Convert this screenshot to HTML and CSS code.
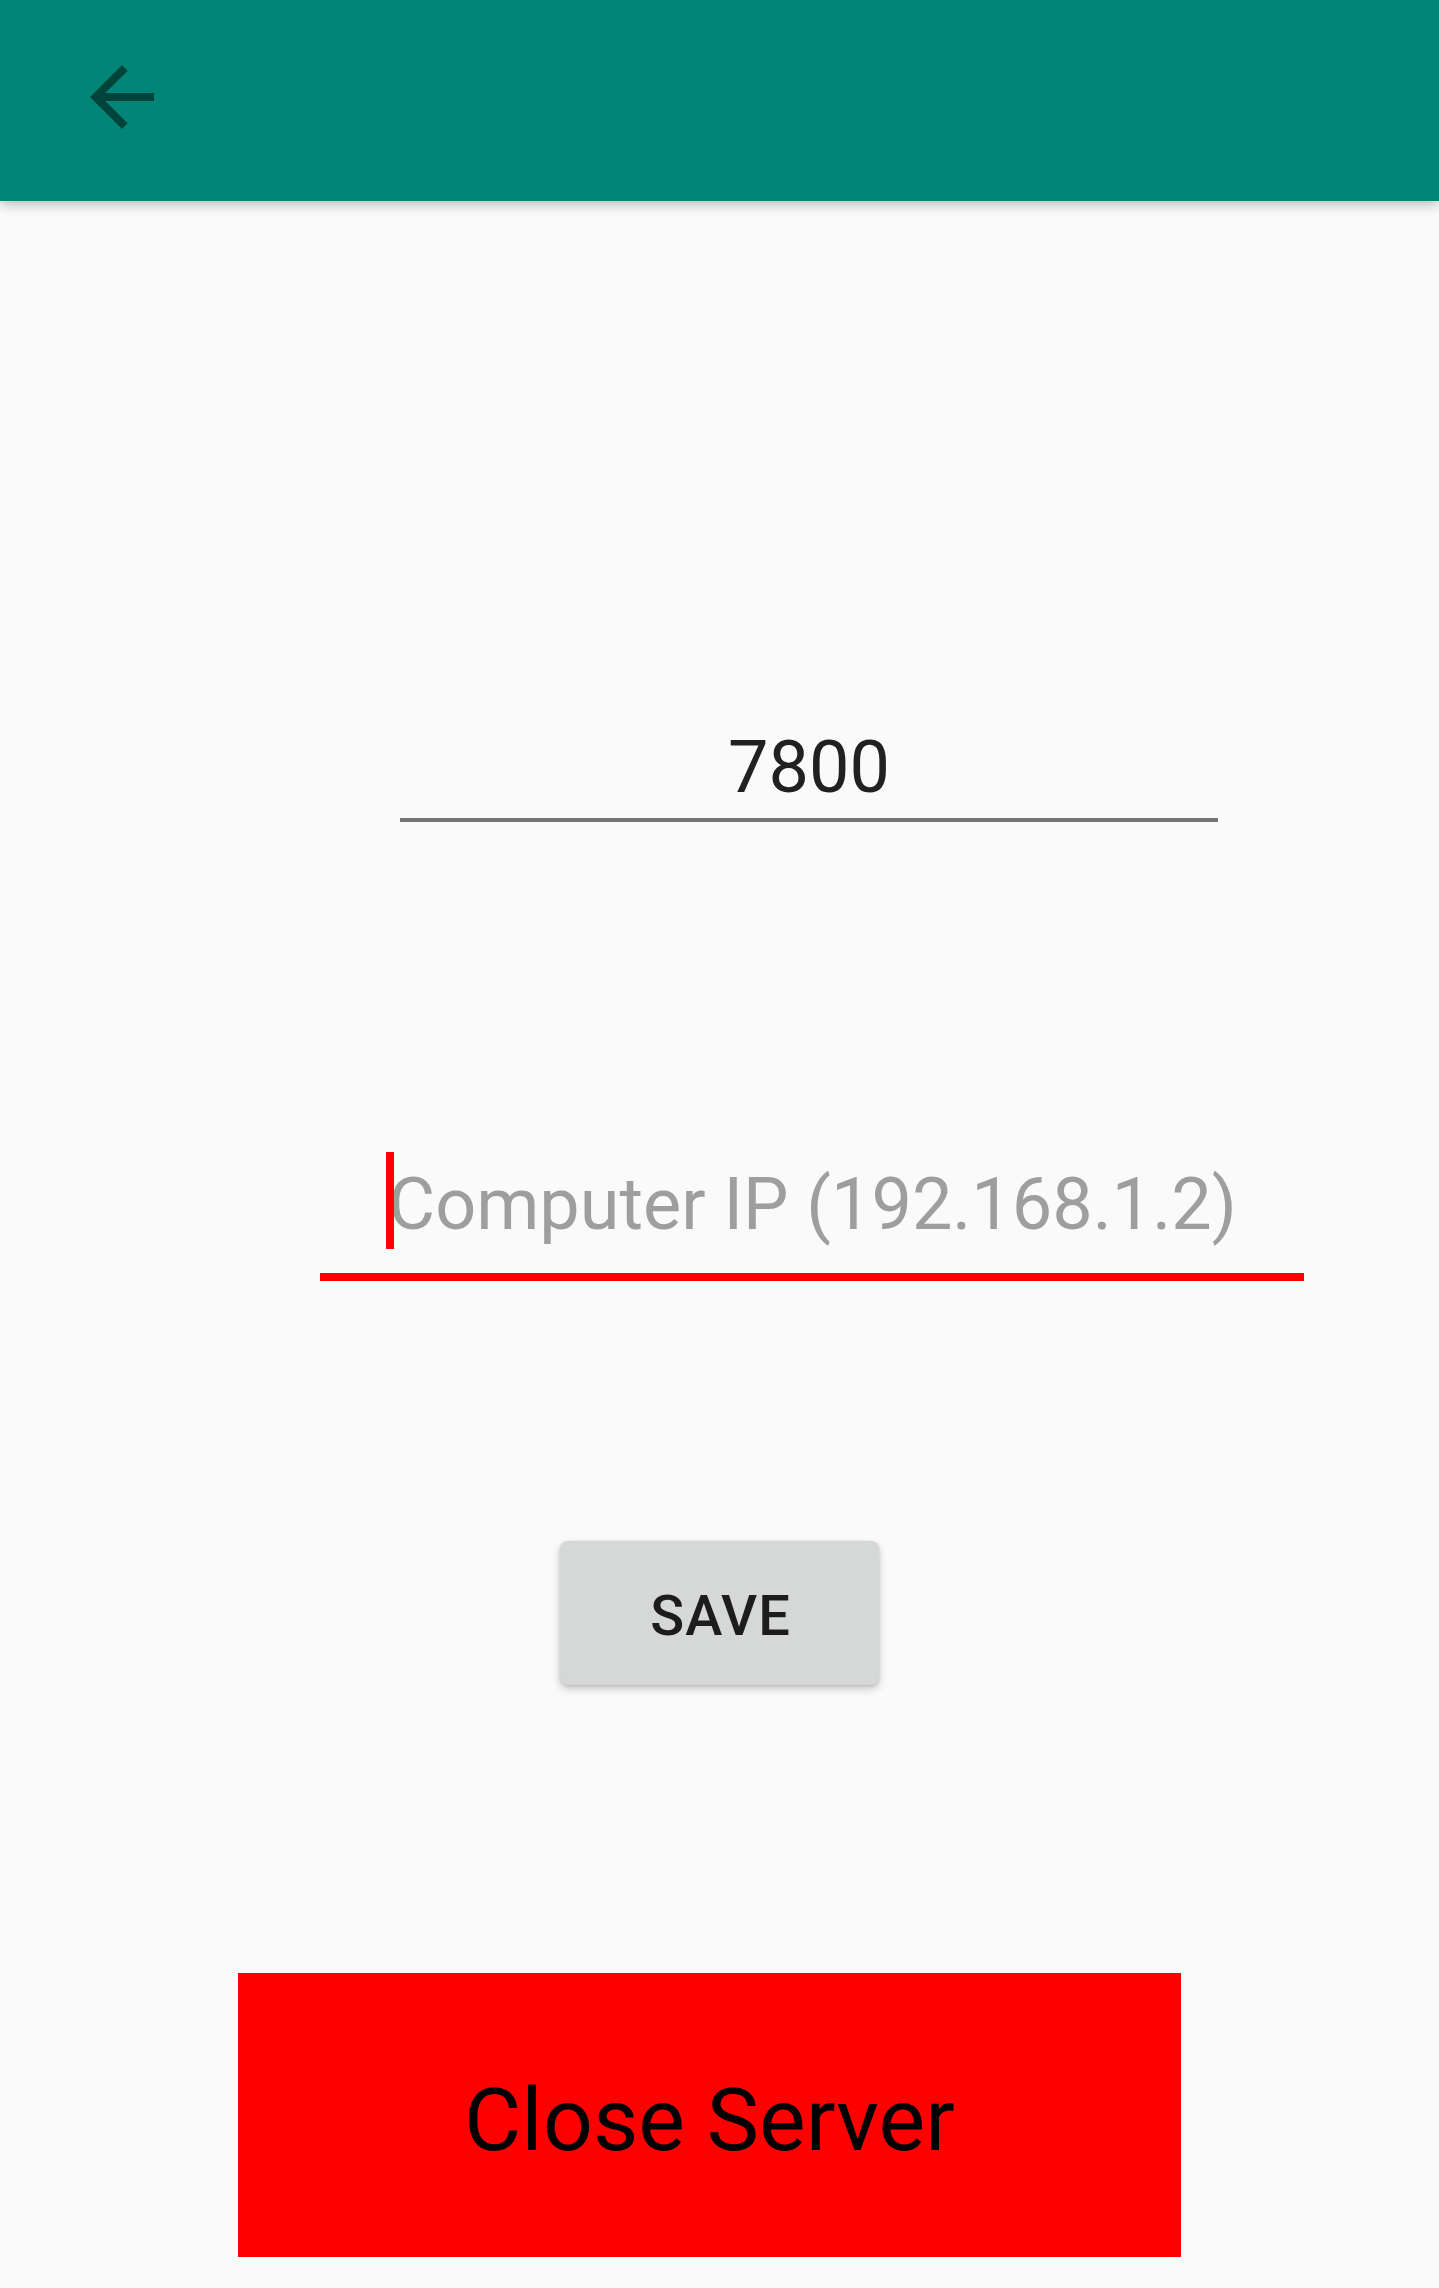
FILE: index.html
```html
<!DOCTYPE html>
<html lang="en">
<head>
<meta charset="utf-8">
<title>Settings</title>
<link rel="stylesheet" href="styles.css">
</head>
<body>
<header class="appbar">
  <button class="back" aria-label="Back">
    <svg viewBox="0 0 24 24" width="96" height="96"><path d="M20 11H7.83l5.59-5.59L12 4l-8 8 8 8 1.41-1.41L7.83 13H20v-2z" fill="currentColor"/></svg>
  </button>
</header>
<main class="content">
  <div class="field field-port"><span class="value">7800</span></div>
  <div class="field field-ip"><span class="hint"><span class="cursor"></span>Computer IP (192.168.1.2)</span></div>
  <button class="btn-save">SAVE</button>
  <button class="btn-close">Close Server</button>
</main>
</body>
</html>
```
FILE: styles.css
```css
html, body {
  margin: 0;
  padding: 0;
}
body {
  width: 1439px;
  height: 2288px;
  overflow: hidden;
  background: #fafafa;
  font-family: Roboto, "Noto Sans", "Liberation Sans", sans-serif;
}
.appbar {
  position: relative;
  z-index: 1;
  height: 201px;
  background: #008577;
  box-shadow: 0 3px 12px rgba(0, 0, 0, 0.28);
  display: flex;
  align-items: flex-start;
}
.back {
  margin: 49px 0 0 74px;
  padding: 0;
  border: 0;
  background: none;
  width: 96px;
  height: 96px;
  color: #00433b;
  display: block;
}
.back svg {
  display: block;
}
.content {
  display: flex;
  flex-direction: column;
  align-items: flex-start;
}
.field {
  box-sizing: border-box;
  text-align: center;
  font-size: 72px;
  line-height: 96px;
}
.field-port {
  margin: 517px 0 0 400px;
  width: 818px;
  padding-top: 2px;
  padding-bottom: 2px;
  border-bottom: 4px solid #757575;
  color: #212121;
}
.field-ip {
  margin: 334px 0 0 320px;
  width: 984px;
  padding-top: 1px;
  padding-bottom: 20px;
  border-bottom: 8px solid #ff0000;
  color: #9e9e9e;
}
.hint {
  position: relative;
  display: inline-block;
  margin-left: 1px;
}
.cursor {
  position: absolute;
  left: -2px;
  top: -5px;
  width: 8px;
  height: 97px;
  background: #ff0000;
}
.btn-save {
  margin: 260px 0 0 560px;
  width: 319px;
  height: 144px;
  border: 0;
  border-radius: 8px;
  background: #d6d7d7;
  box-shadow: 0 4px 8px rgba(0, 0, 0, 0.2), 0 1px 3px rgba(0, 0, 0, 0.12);
  font-family: Roboto, "Noto Sans", sans-serif;
  font-weight: 500;
  font-size: 56px;
  letter-spacing: 1px;
  color: #1c1c1c;
  padding: 5px 0 0 2px;
}
.btn-close {
  margin: 288px 0 0 238px;
  width: 943px;
  height: 284px;
  border: 0;
  border-radius: 0;
  background: #ff0000;
  font-family: Roboto, "Noto Sans", sans-serif;
  font-size: 88px;
  color: #000000;
  padding: 8px 0 0 0;
}
```
